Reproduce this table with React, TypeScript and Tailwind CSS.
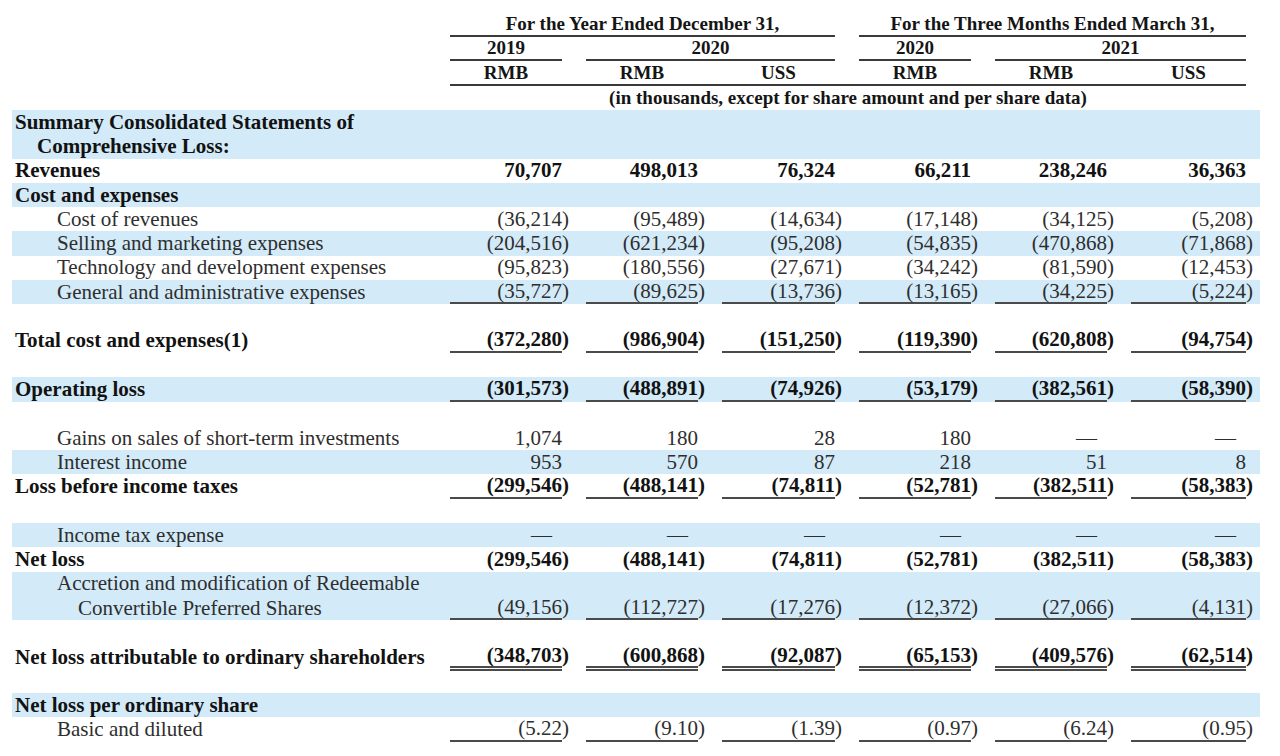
import React from 'react';

type Row = {
  label?: string;
  indent?: number;
  bold?: boolean;
  blue?: boolean;
  vals?: string[];
  line?: 'single' | 'double';
};

const rows: Row[] = [
  { label: 'Summary Consolidated Statements of', indent: 0, bold: true, blue: true },
  { label: 'Comprehensive Loss:', indent: 1, bold: true, blue: true },
  { label: 'Revenues', bold: true, vals: ['70,707', '498,013', '76,324', '66,211', '238,246', '36,363'] },
  { label: 'Cost and expenses', bold: true, blue: true },
  { label: 'Cost of revenues', indent: 2, vals: ['(36,214)', '(95,489)', '(14,634)', '(17,148)', '(34,125)', '(5,208)'] },
  { label: 'Selling and marketing expenses', indent: 2, blue: true, vals: ['(204,516)', '(621,234)', '(95,208)', '(54,835)', '(470,868)', '(71,868)'] },
  { label: 'Technology and development expenses', indent: 2, vals: ['(95,823)', '(180,556)', '(27,671)', '(34,242)', '(81,590)', '(12,453)'] },
  { label: 'General and administrative expenses', indent: 2, blue: true, line: 'single', vals: ['(35,727)', '(89,625)', '(13,736)', '(13,165)', '(34,225)', '(5,224)'] },
  {},
  { label: 'Total cost and expenses(1)', bold: true, line: 'single', vals: ['(372,280)', '(986,904)', '(151,250)', '(119,390)', '(620,808)', '(94,754)'] },
  {},
  { label: 'Operating loss', bold: true, blue: true, line: 'single', vals: ['(301,573)', '(488,891)', '(74,926)', '(53,179)', '(382,561)', '(58,390)'] },
  {},
  { label: 'Gains on sales of short-term investments', indent: 2, vals: ['1,074', '180', '28', '180', '—', '—'] },
  { label: 'Interest income', indent: 2, blue: true, vals: ['953', '570', '87', '218', '51', '8'] },
  { label: 'Loss before income taxes', bold: true, line: 'single', vals: ['(299,546)', '(488,141)', '(74,811)', '(52,781)', '(382,511)', '(58,383)'] },
  {},
  { label: 'Income tax expense', indent: 2, blue: true, vals: ['—', '—', '—', '—', '—', '—'] },
  { label: 'Net loss', bold: true, vals: ['(299,546)', '(488,141)', '(74,811)', '(52,781)', '(382,511)', '(58,383)'] },
  { label: 'Accretion and modification of Redeemable', indent: 2, blue: true },
  { label: 'Convertible Preferred Shares', indent: 3, blue: true, line: 'single', vals: ['(49,156)', '(112,727)', '(17,276)', '(12,372)', '(27,066)', '(4,131)'] },
  {},
  { label: 'Net loss attributable to ordinary shareholders', bold: true, line: 'double', vals: ['(348,703)', '(600,868)', '(92,087)', '(65,153)', '(409,576)', '(62,514)'] },
  {},
  { label: 'Net loss per ordinary share', bold: true, blue: true },
  { label: 'Basic and diluted', indent: 2, line: 'single', vals: ['(5.22)', '(9.10)', '(1.39)', '(0.97)', '(6.24)', '(0.95)'] },
];

const indents = ['pl-[3px]', 'pl-[25px]', 'pl-[45px]', 'pl-[66px]'];

const grid = 'grid grid-cols-[414px_112px_112px_113px_112px_112px_115px] gap-x-6';

const Num = ({ v }: { v: string }) => {
  if (v === '—') return <span className="mr-[10px]">—</span>;
  if (v.startsWith('(')) {
    return (
      <span>
        {v.slice(0, -1)}
        <span className="-mr-[7px]">)</span>
      </span>
    );
  }
  return <span>{v}</span>;
};

const Header = () => (
  <div className="font-bold text-[#151515] text-[19px]">
    <div className={`${grid} h-[24.5px]`}>
      <div />
      <div className="col-span-3 border-b-2 border-[#3a3a3a] flex items-center justify-center">For the Year Ended December 31,</div>
      <div className="col-span-3 border-b-2 border-[#3a3a3a] flex items-center justify-center">For the Three Months Ended March 31,</div>
    </div>
    <div className={`${grid} h-[24.5px]`}>
      <div />
      <div className="border-b-2 border-[#3a3a3a] flex items-center justify-center">2019</div>
      <div className="col-span-2 border-b-2 border-[#3a3a3a] flex items-center justify-center">2020</div>
      <div className="border-b-2 border-[#3a3a3a] flex items-center justify-center">2020</div>
      <div className="col-span-2 border-b-2 border-[#3a3a3a] flex items-center justify-center">2021</div>
    </div>
    <div className={`${grid} h-[24.5px]`}>
      <div />
      {['RMB', 'RMB', 'USS', 'RMB', 'RMB', 'USS'].map((t, i) => (
        <div key={i} className="border-b-2 border-[#3a3a3a] flex items-center justify-center -mr-6 last:mr-0 pr-6 last:pr-0">
          {t}
        </div>
      ))}
    </div>
    <div className={`${grid} h-[24.5px]`}>
      <div />
      <div className="col-span-6 flex items-center justify-center">(in thousands, except for share amount and per share data)</div>
    </div>
  </div>
);

const TableRow = ({ r }: { r: Row }) => {
  const lineCls =
    r.line === 'single'
      ? 'border-b-2 border-[#4a4a4a]'
      : r.line === 'double'
        ? 'border-b-[5px] border-double border-[#4a4a4a]'
        : '';
  const weight = r.bold ? 'font-bold text-[#121212]' : 'font-normal text-[#2e2e2e]';
  return (
    <div className={`${grid} h-[24.3px] pr-4 ${r.blue ? 'bg-[#d3eaf8]' : 'bg-white'} ${weight}`}>
      <div className={`flex items-center whitespace-nowrap ${indents[r.indent ?? 0]}`}>{r.label}</div>
      {(r.vals ?? ['', '', '', '', '', '']).map((v, i) => (
        <div key={i} className={`h-full flex items-center justify-end whitespace-nowrap ${r.vals ? lineCls : ''}`}>
          {v && <Num v={v} />}
        </div>
      ))}
    </div>
  );
};

export default function App() {
  return (
    <div
      className="w-[1280px] h-[756px] bg-white overflow-hidden pt-3 pl-3 text-[21px] leading-none"
      style={{ fontFamily: '"Liberation Serif", "Times New Roman", serif' }}
    >
      <div className="w-[1248px]">
        <div className="pr-4">
          <Header />
        </div>
        {rows.map((r, i) => (
          <TableRow key={i} r={r} />
        ))}
      </div>
    </div>
  );
}
